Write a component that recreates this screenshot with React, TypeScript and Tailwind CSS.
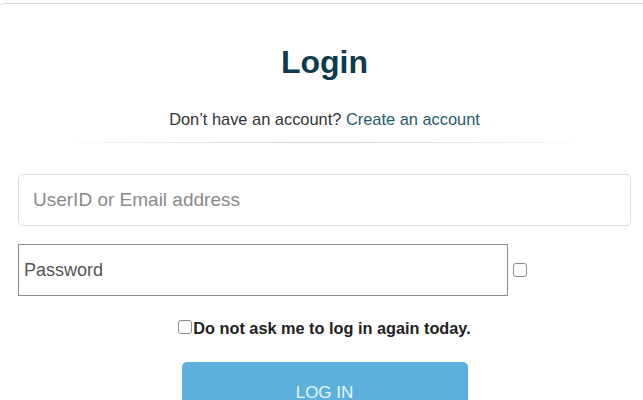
export default function App() {
  return (
    <div className="h-[400px] w-full overflow-hidden bg-white font-['Liberation_Sans',Arial,sans-serif]">
      <div className="mt-[3px] flex flex-col rounded-tl-[4px] border-t border-[#d8d8d8] pl-[18px] pr-[12px]">
        <h1 className="mt-[40px] text-center text-[32px] font-bold leading-[36px] text-[#0e3b4d]">
          Login
        </h1>
        <p className="mt-[29px] text-center text-[16.4px] leading-[20px] text-[#333]">
          Don’t have an account?{" "}
          <a href="#" className="text-[#1f5c6b]">
            Create an account
          </a>
        </p>
        <div className="mx-[30px] mt-[13px] h-px bg-gradient-to-r from-transparent via-[#d0d0d0] to-transparent" />

        <input
          type="text"
          placeholder="UserID or Email address"
          className="mt-[31px] h-[52px] w-full rounded-[5px] border border-[#dcdcdc] px-[14px] text-[19px] text-[#333] outline-none placeholder:text-[#8a8a8a]"
        />

        <div className="mt-[18px] flex items-center gap-[5px]">
          <input
            type="password"
            placeholder="Password"
            className="h-[52px] w-[490px] border border-[#8a8a8a] px-[5px] text-[18px] text-[#333] outline-none placeholder:text-[#555]"
          />
          <input
            type="checkbox"
            className="h-[14px] w-[14px] appearance-none rounded-[3px] border border-[#8a8a8a] bg-white"
          />
        </div>

        <label className="mt-[22px] flex items-end justify-center text-[16.3px] font-bold leading-[20px] text-[#222]">
          <input
            type="checkbox"
            className="mb-[4px] h-[14px] w-[14px] appearance-none rounded-[3px] border border-[#8a8a8a] bg-white"
          />
          <span className="ml-px">Do not ask me to log in again today.</span>
        </label>

        <button className="mt-[24px] h-[62px] w-[286px] self-center rounded-[5px] bg-[#5bb0de] text-[17px] text-[#eaf6fc]">
          LOG IN
        </button>
      </div>
    </div>
  );
}
